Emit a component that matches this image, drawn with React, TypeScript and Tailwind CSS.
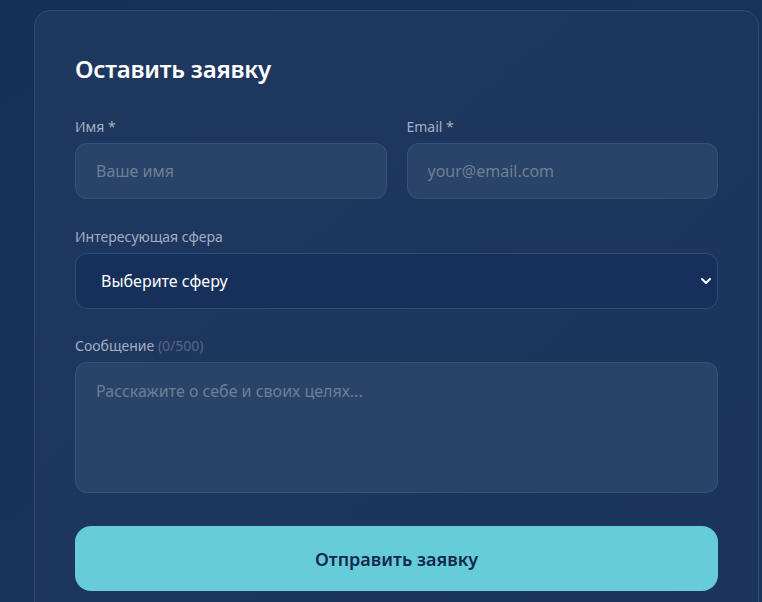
import { useState } from "react"

const fieldBase =
  "block w-full rounded-xl border border-[#33587f]/80 bg-[#2a4468] px-5 text-base text-white placeholder:text-[#6d7f97] outline-none"

function Label({ children }: { children: React.ReactNode }) {
  return <label className="mb-1 block text-sm leading-6 text-[#a3afc2]">{children}</label>
}

export default function App() {
  const [message, setMessage] = useState("")

  return (
    <div
      className="min-h-screen bg-gradient-to-br from-[#142f58] to-[#1a355e] pt-[10px] pl-[34px] pr-[3px]"
      style={{ fontFamily: '"Noto Sans", "Open Sans", sans-serif' }}
    >
      <div className="rounded-2xl border border-[#2e4c74] bg-gradient-to-br from-[#1f3860] to-[#1c345c] p-10">
        <h2 className="mt-[2px] mb-[30px] text-2xl leading-8 font-semibold tracking-[-0.01em] text-white">
          Оставить заявку
        </h2>

        <div className="grid grid-cols-2 gap-5">
          <div>
            <Label>Имя *</Label>
            <input className={`${fieldBase} h-14`} placeholder="Ваше имя" />
          </div>
          <div>
            <Label>Email *</Label>
            <input className={`${fieldBase} h-14`} placeholder="your@email.com" />
          </div>
        </div>

        <div className="mt-[26px]">
          <Label>Интересующая сфера</Label>
          <div className="relative">
            <select className="block h-14 w-full appearance-none rounded-xl border border-[#2d5078] bg-[#16305b] pl-[25px] pr-10 text-base text-white outline-none">
              <option>Выберите сферу</option>
            </select>
            <svg
              className="pointer-events-none absolute top-1/2 right-[6px] -translate-y-1/2"
              width="12"
              height="12"
              viewBox="0 0 12 12"
              fill="none"
            >
              <path d="M2 4l4 4 4-4" stroke="white" strokeWidth="2" strokeLinecap="round" strokeLinejoin="round" />
            </svg>
          </div>
        </div>

        <div className="mt-[25px]">
          <Label>
            Сообщение <span className="text-[#56677f]">({message.length}/500)</span>
          </Label>
          <textarea
            rows={4}
            maxLength={500}
            value={message}
            onChange={(e) => setMessage(e.target.value)}
            className={`${fieldBase} h-[131px] resize-none py-4 leading-6`}
            placeholder="Расскажите о себе и своих целях..."
          />
        </div>

        <button className="mt-[33px] block h-[65px] w-full rounded-2xl bg-[#66ccd8] text-lg font-semibold text-[#13294b]">
          Отправить заявку
        </button>
      </div>
    </div>
  )
}
